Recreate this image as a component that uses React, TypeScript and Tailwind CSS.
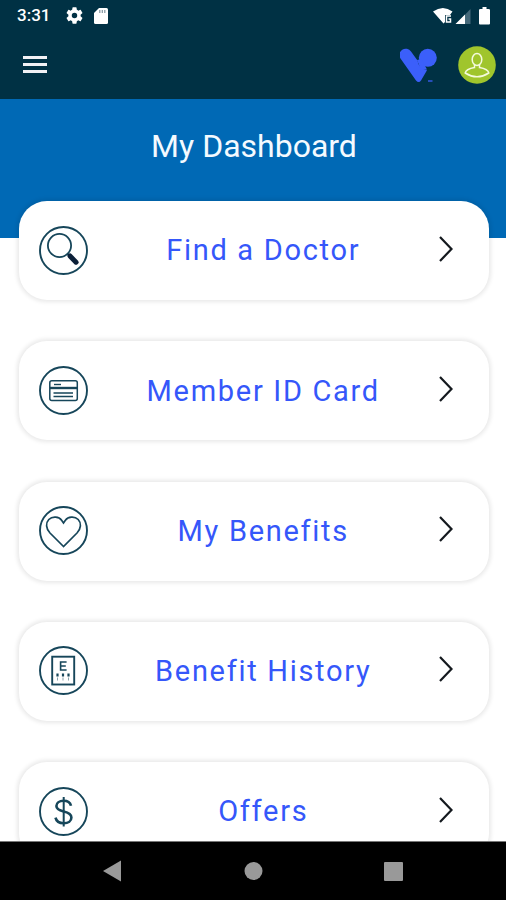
import type { ReactNode } from "react";

const items: { label: string; icon: ReactNode }[] = [
  {
    label: "Find a Doctor",
    icon: (
      <>
        <circle cx="20.5" cy="19.5" r="11.6" strokeWidth="1.8" />
        <path d="M28.8 28l2.6 2.6" strokeWidth="2.2" />
        <path d="M31 30l6 6.2" stroke="#0b1f38" strokeWidth="5" strokeLinecap="round" />
      </>
    ),
  },
  {
    label: "Member ID Card",
    icon: (
      <>
        <rect x="10.8" y="14.8" width="27.5" height="19.7" rx="2" strokeWidth="1.5" />
        <path d="M11 22h27" strokeWidth="2.4" />
        <path d="M15 18.5h7" strokeWidth="1.4" />
        <path d="M14.5 27h19.5M14.5 30.5h19.5" strokeWidth="1.7" />
      </>
    ),
  },
  {
    label: "My Benefits",
    icon: (
      <path
        d="M24.5 40.5L11 27C6.8 22.5 6.5 17 9.8 13.5c3.6-3.7 10.2-3 12.800.7l1.9 2.8 1.9-2.8C29 10.5 35.6 9.8 39.2 13.5c3.3 3.5 3 9-1.2 13.500z"
        strokeWidth="1.7"
      />
    ),
  },
  {
    label: "Benefit History",
    icon: (
      <>
        <rect x="13.2" y="10.7" width="22" height="27.8" strokeWidth="1.9" />
        <path d="M27.6 16h-6v8h6M21.6 20h5.2" strokeWidth="1.6" />
        <path d="M18.5 27.5v3M24 27.5v3M29.5 27.5v3" strokeWidth="2.2" />
        <path d="M18.5 31.5v3M24 31.5v3M29.5 31.5v3" strokeWidth="1" strokeOpacity="0.5" />
      </>
    ),
  },
  {
    label: "Offers",
    icon: (
      <>
        <path
          d="M32 18.800c-.8-3.300-3.600-5-7.400-5-4.300 0-7.200 2-7.200 5.200 0 3.500 3 4.500 7.200 5.400 4.600 1 7.800 2.200 7.800 6 0 3.600-3.200 5.800-7.700 5.800-4.400 0-7.400-2-8.200-5.600"
          strokeWidth="2.6"
        />
        <path d="M24.7 10v29.5" strokeWidth="2" />
      </>
    ),
  },
];

function StatusBar() {
  return (
    <div className="flex h-[31px] items-center pl-[17px] pr-[16px] text-white">
      <span className="w-[49px] text-[17px] font-medium leading-[31px]">3:31</span>
      <svg className="h-[17px] w-[17px]" viewBox="2 2 20 20" fill="currentColor">
        <path d="M19.140 12.940c.04-.3.060-.61.060-.94s-.02-.64-.07-.94l2.030-1.580a.49.49 0 0 0 .12-.61l-1.920-3.320a.49.49 0 0 0-.59-.22l-2.390.96a7 7 0 0 0-1.620-.94l-.36-2.540a.48.48 0 0 0-.48-.41h-3.840a.48.48 0 0 0-.47.41l-.36 2.540c-.59.24-1.130.57-1.620.94l-2.390-.96a.48.48 0 0 0-.59.22L2.740 8.870a.48.48 0 0 0 .12.61l2.030 1.580c-.05.3-.09.63-.09.94s.02.64.07.94l-2.030 1.580a.49.49 0 0 0-.12.61l1.920 3.320c.12.22.37.29.59.22l2.390-.96c.5.38 1.030.7 1.620.94l.36 2.540c.05.24.24.41.48.41h3.840c.24 0 .44-.17.47-.41l.36-2.540a7 7 0 0 0 1.620-.94l2.390.96c.22.08.47 0 .59-.22l1.920-3.320a.48.48 0 0 0-.12-.61zM12 15.200a3.200 3.200 0 1 1 0-6.400 3.200 3.200 0 0 1 0 6.400z" />
      </svg>
      <svg className="ml-[11px] h-[16px] w-[14px]" viewBox="0 0 14 16">
        <path d="M5 0h7.5Q14 0 14 1.5v13q0 1.5-1.5 1.5h-11Q0 16 0 14.5V5z" fill="#fff" />
        <path d="M5.8 2v3M8.3 2v3M10.8 2v3" stroke="#8295a0" strokeWidth="1.2" />
      </svg>
      <svg className="ml-auto h-[18px] w-[57px]" viewBox="0 0 57 18">
        <path d="M0 4.5Q10-2.5 19.5 4.5L17 8h-5v7l-1.5 1.5z" fill="#fff" />
        <path d="M18 9h-4.5v6h4v-3h-2" fill="none" stroke="#fff" strokeWidth="1.5" />
        <path d="M37.5 2v15H23z" fill="#45697a" />
        <path d="M32 7.5v9.500H22.5z" fill="#fff" />
        <path d="M49.5 0h4v2h2q1.5 0 1.5 1v13.5q0 1-1 1h-9q-1 0-1-1V3q0-1 1.5-1h2z" fill="#fff" />
      </svg>
    </div>
  );
}

function Header() {
  return (
    <header className="h-[99px] shrink-0 bg-[#003144]">
      <StatusBar />
      <div className="flex h-[68px] items-center pl-[23px] pr-[10px]">
        <button aria-label="Menu" className="flex w-6 flex-col gap-[4px] pb-[2px]">
          <span className="h-[3px] bg-[#f1f1f5]" />
          <span className="h-[3px] bg-[#f1f1f5]" />
          <span className="h-[3px] bg-[#f1f1f5]" />
        </button>
        <svg className="ml-auto h-[36px] w-[38px]" viewBox="0 0 38 36" fill="#3b5ffa">
          <path d="M.5 11.500A6.200 6.200 0 0 1 11 4.500L17.500 13.500Q18 18 20.700 20.300 23.500 22.700 27 23.200L21 33.500q-2.200 3-5 0z" />
          <circle cx="27.8" cy="10.8" r="9" />
          <path d="M17 13l4.500-1 3 6 2.500 4.500-6 .5z" />
          <path d="M28 34h4.5" stroke="#3b5ffa" strokeWidth="1.3" />
        </svg>
        <svg className="ml-[20px] h-[38px] w-[38px]" viewBox="0 0 38 38" fill="none" stroke="#f4fadc" strokeWidth="1.5">
          <circle cx="19" cy="19" r="18.8" fill="#a0c52c" stroke="none" />
          <ellipse cx="19" cy="13.5" rx="4.8" ry="6" />
          <path d="M16.5 19v2.5Q8 23 7.2 27q11.8 7.5 23.6 0-.8-4-9.3-5.5V19" />
        </svg>
      </div>
    </header>
  );
}

export default function App() {
  return (
    <div className="flex h-[900px] w-[506px] flex-col overflow-hidden bg-white font-['Roboto','Liberation_Sans',sans-serif]">
      <Header />
      <main className="min-h-0 flex-1 overflow-hidden">
        <div className="h-[139px] bg-[#0069b5] pl-[2px] pt-[27px] text-center">
          <h1 className="text-[32px] leading-[40px] text-[#f4faff]">My Dashboard</h1>
        </div>

        <div className="-mt-[37px] flex flex-col gap-[41.25px] pl-[19px] pr-[17px]">
          {items.map((item) => (
            <button
              key={item.label}
              className="flex h-[99px] shrink-0 items-center rounded-[28px] bg-white pb-px pl-[19.5px] pr-[36px] shadow-[0_0_4px_2px_rgba(0,0,0,0.09)]"
            >
              <svg className="h-[49px] w-[49px]" viewBox="0 0 49 49" fill="none" stroke="#16465a">
                <circle cx="24.5" cy="24.5" r="23.5" strokeWidth="1.9" />
                {item.icon}
              </svg>
              <span className="flex-1 pt-[2px] text-center text-[29px] tracking-[1.7px] text-[#3557fa]">
                {item.label}
              </span>
              <svg className="mb-[3px] h-[26px] w-[14px]" viewBox="0 0 14 26" fill="none" stroke="#14191e" strokeWidth="2.2">
                <path d="M1 1l11.5 12-11.5 12" />
              </svg>
            </button>
          ))}
        </div>
      </main>

      {/* Android navigation */}
      <nav className="h-[59px] shrink-0 border-t border-[#777] bg-black">
        <svg className="h-[58px] w-full" viewBox="0 0 506 58" fill="#999">
          <path d="M103 29l18-10.5v21z" />
          <circle cx="253.5" cy="29" r="9" />
          <rect x="384" y="20" width="19" height="19" rx="1" />
        </svg>
      </nav>
    </div>
  );
}
